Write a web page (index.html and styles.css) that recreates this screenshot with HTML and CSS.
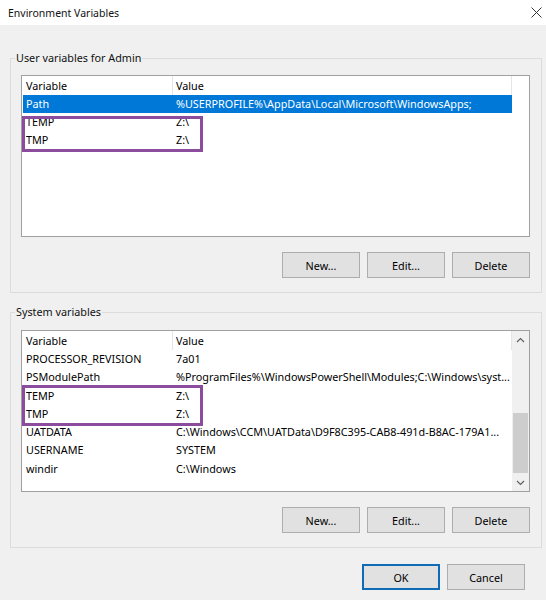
FILE: index.html
```html
<!DOCTYPE html>
<html>
<head>
<meta charset="utf-8">
<link rel="stylesheet" href="styles.css">
</head>
<body>
<div class="titlebar">
  <span class="title">Environment Variables</span>
  <svg class="close" width="11" height="11" viewBox="0 0 11 11"><path d="M0.5 0.5 L10.5 10.5 M10.5 0.5 L0.5 10.5" stroke="#333" stroke-width="1" fill="none"/></svg>
</div>
<div class="content">
  <fieldset class="group">
    <legend>User variables for Admin</legend>
    <div class="group-body">
      <div class="list list-user">
        <div class="table">
          <div class="row head"><span class="c1">Variable</span><span class="c2">Value</span></div>
          <div class="row sel"><span class="c1">Path</span><span class="c2">%USERPROFILE%\AppData\Local\Microsoft\WindowsApps;</span></div>
          <div class="mark mark-user">
            <div class="row"><span class="c1">TEMP</span><span class="c2">Z:\</span></div>
            <div class="row"><span class="c1">TMP</span><span class="c2">Z:\</span></div>
          </div>
        </div>
      </div>
      <div class="buttons">
        <button class="btn">New...</button>
        <button class="btn">Edit...</button>
        <button class="btn">Delete</button>
      </div>
    </div>
  </fieldset>
  <fieldset class="group group-sys">
    <legend>System variables</legend>
    <div class="group-body">
      <div class="list list-sys">
        <div class="table">
          <div class="row head"><span class="c1">Variable</span><span class="c2">Value</span></div>
          <div class="row"><span class="c1">PROCESSOR_REVISION</span><span class="c2">7a01</span></div>
          <div class="row"><span class="c1">PSModulePath</span><span class="c2">%ProgramFiles%\WindowsPowerShell\Modules;C:\Windows\syst...</span></div>
          <div class="mark mark-sys">
            <div class="row"><span class="c1">TEMP</span><span class="c2">Z:\</span></div>
            <div class="row"><span class="c1">TMP</span><span class="c2">Z:\</span></div>
          </div>
          <div class="row"><span class="c1">UATDATA</span><span class="c2">C:\Windows\CCM\UATData\D9F8C395-CAB8-491d-B8AC-179A1...</span></div>
          <div class="row"><span class="c1">USERNAME</span><span class="c2">SYSTEM</span></div>
          <div class="row"><span class="c1">windir</span><span class="c2">C:\Windows</span></div>
        </div>
        <div class="scrollbar">
          <div class="arrow"><svg width="9" height="6" viewBox="0 0 9 6"><path d="M1 5 L4.5 1.5 L8 5" stroke="#606060" stroke-width="1.2" fill="none"/></svg></div>
          <div class="track"><div class="thumb"></div></div>
          <div class="arrow"><svg width="9" height="6" viewBox="0 0 9 6"><path d="M1 1 L4.5 4.5 L8 1" stroke="#606060" stroke-width="1.2" fill="none"/></svg></div>
        </div>
      </div>
      <div class="buttons">
        <button class="btn">New...</button>
        <button class="btn">Edit...</button>
        <button class="btn">Delete</button>
      </div>
    </div>
  </fieldset>
  <div class="dialog-buttons">
    <button class="btn btn-default">OK</button>
    <button class="btn">Cancel</button>
  </div>
</div>
</body>
</html>
```
FILE: styles.css
```css
*, *::before, *::after { box-sizing: border-box; }
html, body { margin: 0; padding: 0; }
body {
  width: 546px;
  height: 600px;
  background: #f0f0f0;
  font-family: "Noto Sans", "Open Sans", sans-serif;
  font-size: 10.8px;
  color: #000;
  overflow: hidden;
}
.titlebar {
  height: 25px;
  background: #fff;
  display: flex;
  align-items: center;
  justify-content: space-between;
  padding: 0 4px 0 8px;
}
.title { font-size: 10.5px; color: #111; }
.close { display: block; margin-top: 0; }
.content {
  padding: 0 4px 0 10px;
}
.group {
  margin: 26px 0 0 0;
  padding: 0;
  border: 1px solid #dcdcdc;
  min-width: 0;
}
.group-sys { margin-top: 12px; }
.group legend {
  margin-left: 4px;
  padding: 0 1px;
  line-height: 14px;
  color: #111;
}
.group-body {
  padding: 10px 11px 14px 10px;
}
.group-sys .group-body { padding-top: 11px; }
.list {
  background: #fff;
  border: 1px solid #a0a0a0;
  display: flex;
  overflow: hidden;
}
.list-user { height: 162px; }
.list-sys { height: 162px; }
.table {
  flex: 1;
  padding-left: 1px;
  min-width: 0;
}
.row {
  display: flex;
  width: 489px;
  height: 18px;
  line-height: 18px;
  white-space: nowrap;
}
.list-sys .row { height: 18.3px; line-height: 18.3px; }
.row.head, .list-sys .row.head { height: 19px; line-height: 19px; }
.c1 { width: 150px; padding-left: 3px; flex: none; overflow: hidden; }
.c2 { flex: 1; padding-left: 3px; overflow: hidden; text-overflow: ellipsis; }
.head .c1 { border-right: 1px solid #e5e5e5; }
.head .c2 { border-right: 1px solid #e5e5e5; }
.sel { background: #0078d7; color: #fff; }
.mark { position: relative; }
.mark::after {
  content: "";
  position: absolute;
  left: -1px;
  width: 181px;
  border: 3px solid #8b4c9e;
  pointer-events: none;
}
.mark-user::after { top: 3px; height: 36px; }
.mark-sys::after { top: -2px; height: 41px; }
.scrollbar {
  width: 17px;
  flex: none;
  background: #f0f0f0;
  display: flex;
  flex-direction: column;
}
.arrow {
  height: 17px;
  display: flex;
  align-items: center;
  justify-content: center;
}
.track {
  flex: 1;
  display: flex;
  flex-direction: column;
  justify-content: flex-end;
  padding: 0 1px 1px 1px;
}
.thumb {
  height: 60px;
  background: #cdcdcd;
}
.buttons {
  display: flex;
  justify-content: flex-end;
  gap: 7px;
  margin-top: 15px;
}
.btn {
  width: 78px;
  height: 26px;
  background: #e1e1e1;
  border: 1px solid #adadad;
  font-family: inherit;
  font-size: 10.8px;
  color: #000;
  padding: 0;
  margin: 0;
}
.btn-default { border-color: #0f6bb5; box-shadow: inset 0 0 0 1px #0f6bb5; }
.dialog-buttons {
  display: flex;
  justify-content: flex-end;
  gap: 7px;
  margin-top: 16px;
  padding-right: 17px;
}
```
